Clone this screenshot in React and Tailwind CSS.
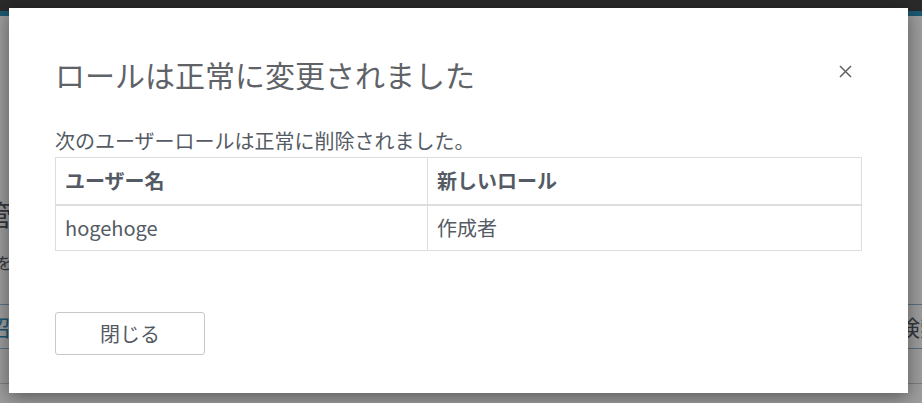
export default function App() {
  return (
    <div className="relative h-[403px] w-[922px] overflow-hidden bg-white font-['Noto_Sans_CJK_JP','Noto_Sans',sans-serif]">
      {/* page behind the modal */}
      <div className="h-[11px] bg-[#444]" />
      <div className="h-[5px] bg-[#2f8fb8]" />
      <div className="pt-[178px]">
        <div className="ml-[-16px] text-[28px] leading-[40px] text-[#545b64]">管理</div>
        <div className="ml-[-4px] mt-[16px] text-[16px] leading-[24px] text-[#545b64]">を</div>
        <div className="mt-[30px] flex h-[45px] items-center justify-between border-y border-[#8fb9d6]">
          <span className="ml-[-12px] text-[22px] text-[#2f8fb8]">招待</span>
          <span className="mr-[-20px] text-[22px] text-[#545b64]">検索</span>
        </div>
        <div className="mt-[34px] border-t border-[#ccc]" />
      </div>

      {/* overlay + modal */}
      <div className="absolute inset-0 bg-black/[0.38]">
        <div className="ml-[9px] mt-[8px] flex h-[385px] w-[899px] flex-col bg-white px-[46px] shadow-[0_4px_18px_rgba(0,0,0,0.45)]">
          <div className="flex items-center justify-between pt-[44px]">
            <h2 className="text-[30px] font-normal leading-[45px] text-[#5f6368]">
              ロールは正常に変更されました
            </h2>
            <button className="mr-[7px] mt-[-6px] flex h-[20px] w-[20px] items-center justify-center">
              <svg width="13" height="13" viewBox="0 0 13 13" fill="none">
                <path d="M1 1L12 12M12 1L1 12" stroke="#666" strokeWidth="1.6" />
              </svg>
            </button>
          </div>

          <p className="mt-[30px] text-[20px] leading-[28px] text-[#545b64]">
            次のユーザーロールは正常に削除されました。
          </p>

          <table className="mt-[2px] w-[807px] border-collapse text-[20px] text-[#545b64]">
            <thead>
              <tr className="h-[47px] border-b-[2px] border-[#ddd]">
                <th className="w-[372px] border border-[#ddd] border-b-[2px] px-[9px] text-left font-bold">ユーザー名</th>
                <th className="border border-[#ddd] border-b-[2px] px-[9px] text-left font-bold">新しいロール</th>
              </tr>
            </thead>
            <tbody>
              <tr className="h-[46px]">
                <td className="border border-[#ddd] px-[9px]">hogehoge</td>
                <td className="border border-[#ddd] px-[9px]">作成者</td>
              </tr>
            </tbody>
          </table>

          <div className="mt-[61px]">
            <button className="h-[43px] w-[150px] rounded-[3px] border border-[#c8c8c8] bg-white text-[20px] text-[#545b64]">
              閉じる
            </button>
          </div>
        </div>
      </div>
    </div>
  );
}
